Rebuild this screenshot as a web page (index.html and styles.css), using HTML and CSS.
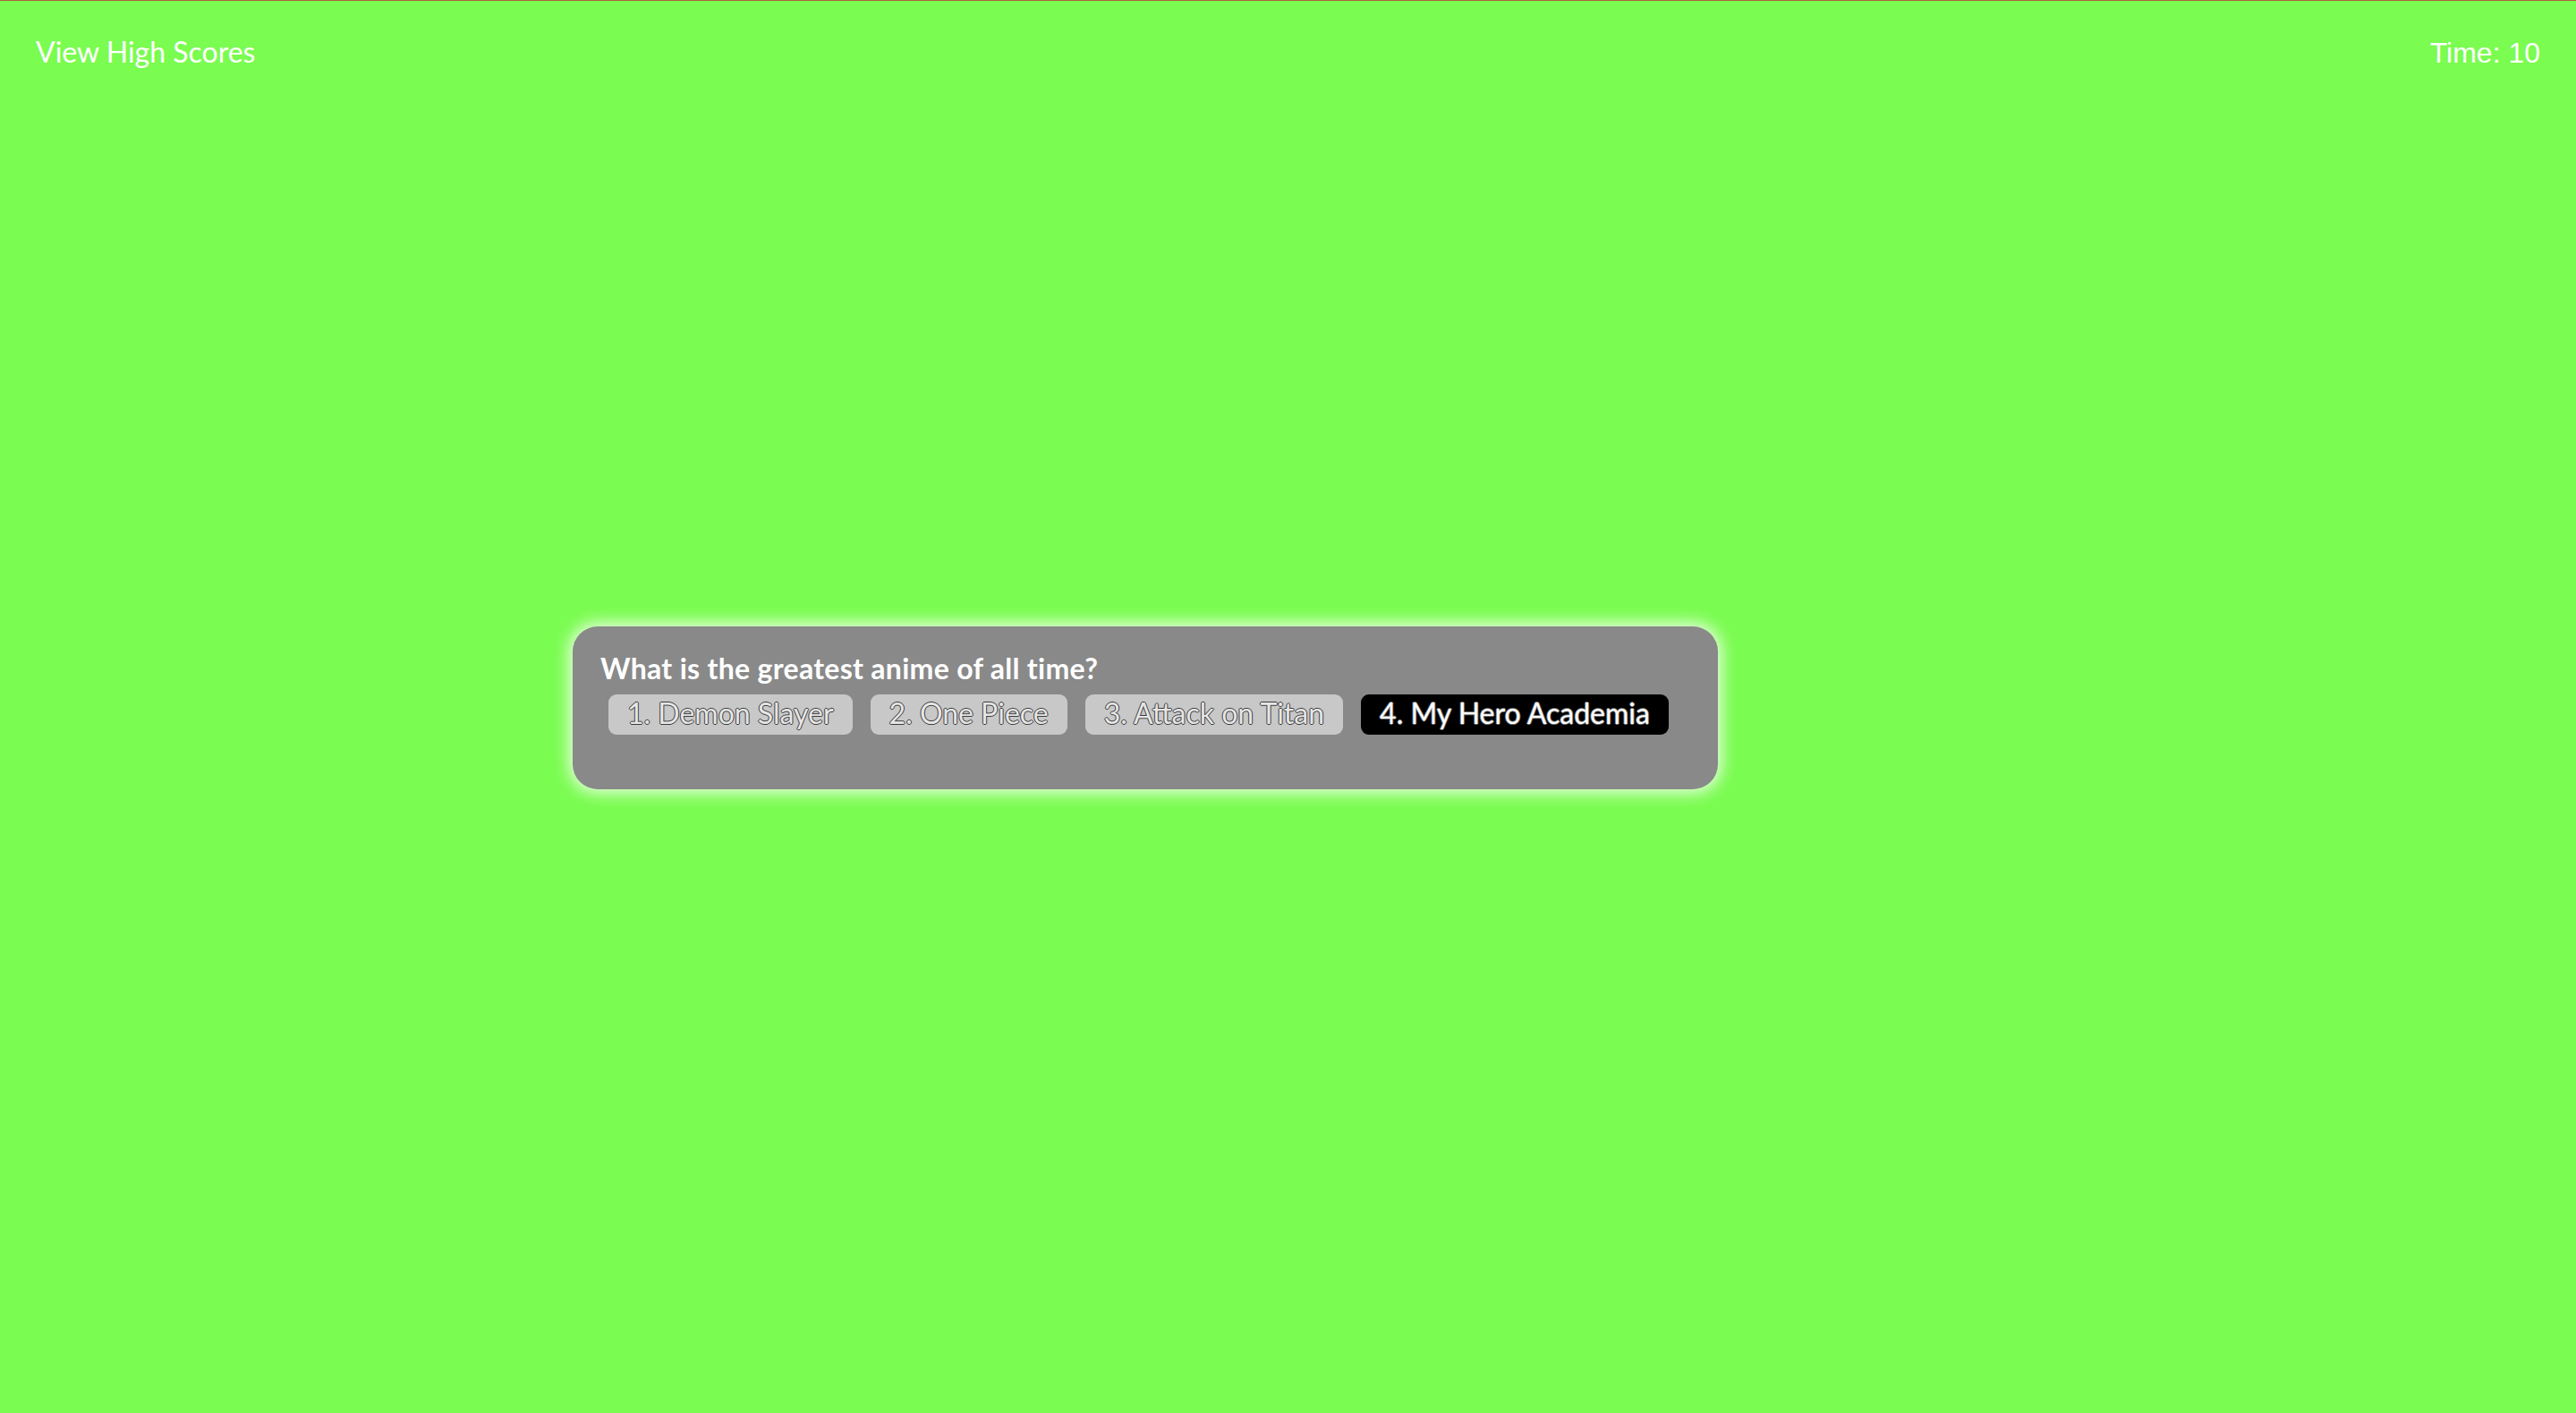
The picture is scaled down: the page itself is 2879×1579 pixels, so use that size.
FILE: index.html
```html
<!DOCTYPE html>
<html lang="en">
<head>
<meta charset="utf-8">
<title>Anime Quiz</title>
<link rel="stylesheet" href="styles.css">
</head>
<body>
<header class="topbar">
  <a class="highscores">View High Scores</a>
  <span class="timer">Time: 10</span>
</header>
<main class="stage">
  <section class="quiz-card">
    <h2 class="question">What is the greatest anime of all time?</h2>
    <div class="choices">
      <button class="choice choice-used">1. Demon Slayer</button>
      <button class="choice choice-used">2. One Piece</button>
      <button class="choice choice-used">3. Attack on Titan</button>
      <button class="choice choice-active">4. My Hero Academia</button>
    </div>
  </section>
</main>
</body>
</html>
```
FILE: styles.css
```css
html, body {
  height: 100%;
}
body {
  margin: 0;
  box-sizing: border-box;
  background: #7afc50;
  border-top: 1px solid #ad6444;
  display: grid;
  grid-template-rows: auto 1fr;
  font-family: Lato, "Open Sans", sans-serif;
  color: #fff;
}
.topbar {
  display: flex;
  justify-content: space-between;
  align-items: baseline;
  padding: 38px 40px 0 40px;
  height: 40px;
}
.highscores {
  font-family: Lato, sans-serif;
  font-size: 32px;
  line-height: 1.2;
  color: #fff;
}
.timer {
  font-family: "Liberation Sans", Arial, sans-serif;
  font-size: 32px;
  color: #fff;
}
.stage {
  display: flex;
  align-items: center;
  padding-bottom: 77px;
}
.quiz-card {
  box-sizing: border-box;
  width: 1280px;
  height: 182px;
  margin-left: 640px;
  padding: 28px 31px 0 31px;
  background: #898989;
  border-radius: 28px;
  box-shadow: 0 0 18px 4px rgba(255, 255, 255, 0.85);
}
.question {
  margin: 0;
  font-family: Lato, sans-serif;
  font-weight: 700;
  font-size: 32px;
  letter-spacing: 0.3px;
  line-height: 1.2;
  color: #fff;
}
.choices {
  display: flex;
  gap: 20px;
  margin: 10px 0 0 9px;
}
.choice {
  font-family: Lato, sans-serif;
  font-size: 32px;
  line-height: 40px;
  height: 45px;
  padding: 1px 21px 4px 21px;
  border: none;
  border-radius: 9px;
  cursor: pointer;
}
.choice-used {
  background: #c8c8c8;
  color: #e6e6e6;
  text-shadow: -1px 0 #3c3c3c, 1px 0 #3c3c3c, 0 -1px #3c3c3c, 0 1px #3c3c3c;
}
.choice-active {
  background: #000;
  color: #fff;
  text-shadow: -1px 0 #6a6a6a, 1px 0 #6a6a6a, 0 -1px #6a6a6a, 0 1px #6a6a6a;
}
```
